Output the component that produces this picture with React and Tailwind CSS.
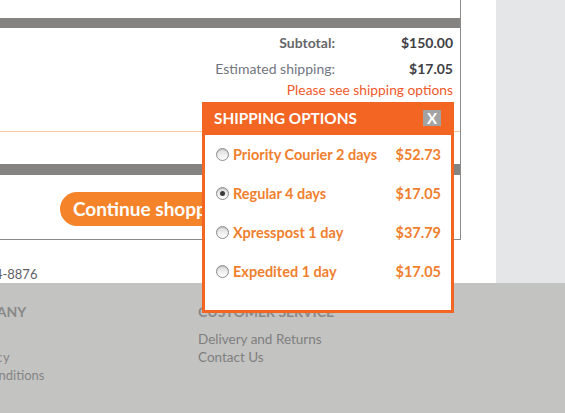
import React from 'react';

const options = [
    { label: 'Priority Courier 2 days', price: '$52.73', checked: false },
    { label: 'Regular 4 days', price: '$17.05', checked: true },
    { label: 'Xpresspost 1 day', price: '$37.79', checked: false },
    { label: 'Expedited 1 day', price: '$17.05', checked: false },
];

const Radio = ({ checked }) => (
    <span className="w-[13px] h-[13px] rounded-full border border-[#8c8c8c] bg-gradient-to-b from-[#dcdcdc] to-white flex items-center justify-center shrink-0 shadow-[inset_0_1px_1px_rgba(0,0,0,0.15)]">
        {checked && <span className="w-[5px] h-[5px] rounded-full bg-[#3a3a3a]"></span>}
    </span>
);

const App = () => {
    return (
        <div className="w-[565px] h-[413px] relative overflow-hidden bg-white font-['Lato',sans-serif]">
            {/* Upper page */}
            <div className="flex h-[283px]">
                <div className="w-[496px] flex flex-col">
                    {/* Cart box */}
                    <div className="w-[461px] h-[242px] border-r border-b border-[#8a8a8a] flex flex-col">
                        <div className="h-[18px]"></div>
                        <div className="h-[10px] bg-[#858381]"></div>
                        <div className="pr-[7px] pt-[1px] flex flex-col">
                            <div className="flex justify-end items-center h-[26px]">
                                <span className="text-[14px] font-bold text-[#66676b]">Subtotal:</span>
                                <span className="w-[118px] text-right text-[14px] font-bold text-[#3f4044]">$150.00</span>
                            </div>
                            <div className="flex justify-end items-center h-[26px]">
                                <span className="text-[14px] text-[#72767f]">Estimated shipping:</span>
                                <span className="w-[118px] text-right text-[14px] font-bold text-[#3f4044]">$17.05</span>
                            </div>
                            <div className="text-right text-[13.8px] text-[#f1592a] leading-[18px]">Please see shipping options</div>
                        </div>
                        <div className="mt-[32px] h-px bg-[#f7c8a2]"></div>
                        <div className="mt-[32px] h-[11px] bg-[#858381]"></div>
                        <div className="pl-[60px] pt-[17px]">
                            <div className="h-[34px] w-[200px] rounded-full bg-[#f4832a] text-white font-bold text-[19px] pl-[13px] flex items-center whitespace-nowrap">
                                Continue shopping
                            </div>
                        </div>
                    </div>
                    <div className="mt-[25px] -ml-[60px] text-[13px] text-[#5f6168] leading-[18px]">1-800-234-8876</div>
                </div>
                <div className="flex-1 bg-[#e5e6e8]"></div>
            </div>

            {/* Footer */}
            <div className="h-[130px] bg-[#c3c3c1] flex pt-[19px]">
                <div className="w-[198px] -ml-[79px] shrink-0 flex flex-col">
                    <div className="text-[14px] font-bold text-[#898989] uppercase leading-[20px]">Our Company</div>
                    <div className="mt-[8px] text-[13px] text-[#858585] leading-[18px]">About Us</div>
                    <div className="text-[13px] text-[#858585] leading-[18px] tracking-[0.8px]">Privacy Policy</div>
                    <div className="text-[13px] text-[#858585] leading-[18px]">Terms and Conditions</div>
                </div>
                <div className="ml-[79px] flex flex-col">
                    <div className="text-[14px] font-bold text-[#898989] uppercase leading-[20px]">Customer Service</div>
                    <div className="mt-[8px] text-[13.5px] text-[#7f7f7f] leading-[18px]">Delivery and Returns</div>
                    <div className="text-[13.5px] text-[#7f7f7f] leading-[18px]">Contact Us</div>
                </div>
            </div>

            {/* Shipping options popup */}
            <div className="absolute left-[202px] top-[102px] w-[252px] h-[211px] border-[3px] border-[#f26522] bg-white flex flex-col">
                <div className="h-[30px] bg-[#f26522] flex items-start justify-between pt-[5px] pl-[9px] pr-[10px]">
                    <span className="text-white font-bold text-[15.3px] leading-[16px]">SHIPPING OPTIONS</span>
                    <span className="w-[18px] h-[16px] bg-[#a3a3a3] text-white font-bold text-[15px] leading-none flex items-center justify-center">X</span>
                </div>
                {options.map((opt) => (
                    <div key={opt.label} className="h-[39px] flex items-center pl-[11px] pr-[10px]">
                        <Radio checked={opt.checked} />
                        <span className="ml-[4px] text-[14.5px] font-bold text-[#f07f2e] flex-1">{opt.label}</span>
                        <span className="text-[14.5px] font-bold text-[#f07f2e]">{opt.price}</span>
                    </div>
                ))}
            </div>
        </div>
    );
};

export default App;
